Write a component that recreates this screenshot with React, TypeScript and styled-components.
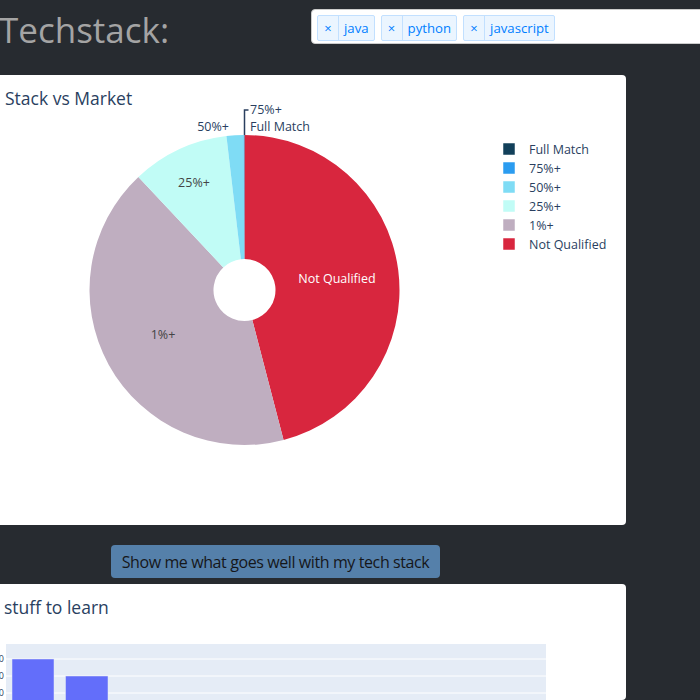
import React from 'react';
import styled, { createGlobalStyle } from 'styled-components';

const GlobalStyle = createGlobalStyle`
  html, body {
    margin: 0;
    padding: 0;
    background: #272b30;
    overflow: hidden;
  }
`;

const Page = styled.div`
  width: 720px;
  margin-left: -10px;
  font-family: "Open Sans", "Liberation Sans", sans-serif;
`;

const Header = styled.div`
  display: flex;
  align-items: flex-start;
  height: 75px;
`;

const Title = styled.h1`
  margin: 6px 0 0 9px;
  width: 312px;
  font-size: 35px;
  font-weight: 400;
  color: #a4a4a4;
  line-height: 48px;
`;

const TagBox = styled.div`
  margin-top: 9px;
  flex: 1;
  height: 35px;
  box-sizing: border-box;
  background: #fff;
  border: 1px solid #ccc;
  border-radius: 4px;
  display: flex;
  align-items: center;
  gap: 6px;
  padding: 2px 5px 0;
`;

const Tag = styled.div`
  display: flex;
  height: 26px;
  box-sizing: border-box;
  background: #ebf5ff;
  border: 1px solid #c2e0ff;
  border-radius: 2px;
  color: #007eff;
  font-size: 13.2px;
  line-height: 25px;
`;

const TagIcon = styled.span`
  width: 20px;
  text-align: center;
  border-right: 1px solid #c2e0ff;
  font-size: 13px;
`;

const TagLabel = styled.span`
  padding: 0 5px;
`;

const Card = styled.div<{ $h: number }>`
  width: 636px;
  height: ${({ $h }) => $h}px;
  background: #fff;
  border-radius: 0 4px 4px 0;
  overflow: hidden;
`;

const ButtonRow = styled.div`
  display: flex;
  padding: 20px 0 6px 121px;
`;

const ActionButton = styled.button`
  height: 33px;
  width: 329px;
  background: #5580aa;
  border: none;
  border-radius: 4px;
  color: #15171a;
  font-family: "Open Sans", "Liberation Sans", sans-serif;
  font-size: 16px;
  letter-spacing: -0.4px;
  padding: 0;
`;

const CX = 244.5;
const CY = 290;
const R = 155;
const RI = 31;

const slices = [
  { label: 'Not Qualified', color: '#d8263e', deg: 165.4 },
  { label: '1%+', color: '#bfaec0', deg: 151.4 },
  { label: '25%+', color: '#c1fcf6', deg: 36.5 },
  { label: '50%+', color: '#7fdcf5', deg: 6.4 },
  { label: '75%+', color: '#2b9cf0', deg: 0.2 },
  { label: 'Full Match', color: '#12405a', deg: 0.1 },
];

const legendOrder = ['Full Match', '75%+', '50%+', '25%+', '1%+', 'Not Qualified'];

const pt = (deg: number, r: number) => {
  const a = (deg * Math.PI) / 180;
  return [CX + r * Math.sin(a), CY - r * Math.cos(a)];
};

const slicePath = (from: number, to: number) => {
  const [x1, y1] = pt(from, R);
  const [x2, y2] = pt(to, R);
  const [x3, y3] = pt(to, RI);
  const [x4, y4] = pt(from, RI);
  const large = to - from > 180 ? 1 : 0;
  return `M${x1} ${y1} A${R} ${R} 0 ${large} 1 ${x2} ${y2} L${x3} ${y3} A${RI} ${RI} 0 ${large} 0 ${x4} ${y4} Z`;
};

const PieChart = () => {
  let acc = 0;
  const paths = slices.map((s) => {
    const p = slicePath(acc, acc + s.deg);
    acc += s.deg;
    return <path key={s.label} d={p} fill={s.color} />;
  });
  return (
    <svg width="636" height="450" viewBox="-10 75 636 450" fontFamily='"Open Sans", verdana, arial, sans-serif'>
      <text x="5" y="105" fontSize="17.5" fill="#2a3f5f">Stack vs Market</text>
      {paths}
      <text x="337" y="283" fontSize="12.5" fill="#fff" textAnchor="middle">Not Qualified</text>
      <text x="163" y="339" fontSize="12.5" fill="#444" textAnchor="middle">1%+</text>
      <text x="194" y="187" fontSize="12.5" fill="#444" textAnchor="middle">25%+</text>
      <text x="229" y="131" fontSize="12.5" fill="#2a3f5f" textAnchor="end">50%+</text>
      <path d="M248.5 110 H244.5 V135" stroke="#2a3f5f" strokeWidth="1.5" fill="none" />
      <text x="250" y="114" fontSize="12.5" fill="#2a3f5f">75%+</text>
      <text x="250" y="131" fontSize="12.5" fill="#2a3f5f">Full Match</text>
      {legendOrder.map((l, i) => {
        const s = slices.find((x) => x.label === l)!;
        const y = 149 + i * 19;
        return (
          <g key={l}>
            <rect x="503" y={y - 6} width="12" height="12" fill={s.color} stroke="#fff" strokeWidth="0.5" />
            <text x="529" y={y + 5} fontSize="12.5" fill="#2a3f5f">{l}</text>
          </g>
        );
      })}
    </svg>
  );
};

const BarChart = () => (
  <svg width="636" height="116" viewBox="-10 584 636 116" fontFamily='"Open Sans", verdana, arial, sans-serif'>
    <text x="4" y="614" fontSize="17.5" fill="#2a3f5f">stuff to learn</text>
    <rect x="6" y="644" width="540" height="60" fill="#e5ecf6" />
    {[659, 676, 693].map((y) => (
      <line key={y} x1="6" x2="546" y1={y} y2={y} stroke="#fff" strokeWidth="1" />
    ))}
    {['30', '20', '10'].map((t, i) => (
      <text key={t} x="4" y={662 + i * 17} fontSize="9" fill="#2a3f5f" textAnchor="end">{t}</text>
    ))}
    <rect x="12" y="659" width="42" height="60" fill="#636efa" stroke="#e5ecf6" strokeWidth="0.5" />
    <rect x="65.5" y="676" width="42.5" height="60" fill="#636efa" stroke="#e5ecf6" strokeWidth="0.5" />
  </svg>
);

export default function App() {
  return (
    <>
      <GlobalStyle />
      <Page>
        <Header>
          <Title>Techstack:</Title>
          <TagBox>
            {['java', 'python', 'javascript'].map((t) => (
              <Tag key={t}>
                <TagIcon>×</TagIcon>
                <TagLabel>{t}</TagLabel>
              </Tag>
            ))}
          </TagBox>
        </Header>
        <Card $h={450}>
          <PieChart />
        </Card>
        <ButtonRow>
          <ActionButton>Show me what goes well with my tech stack</ActionButton>
        </ButtonRow>
        <Card $h={116}>
          <BarChart />
        </Card>
      </Page>
    </>
  );
}
